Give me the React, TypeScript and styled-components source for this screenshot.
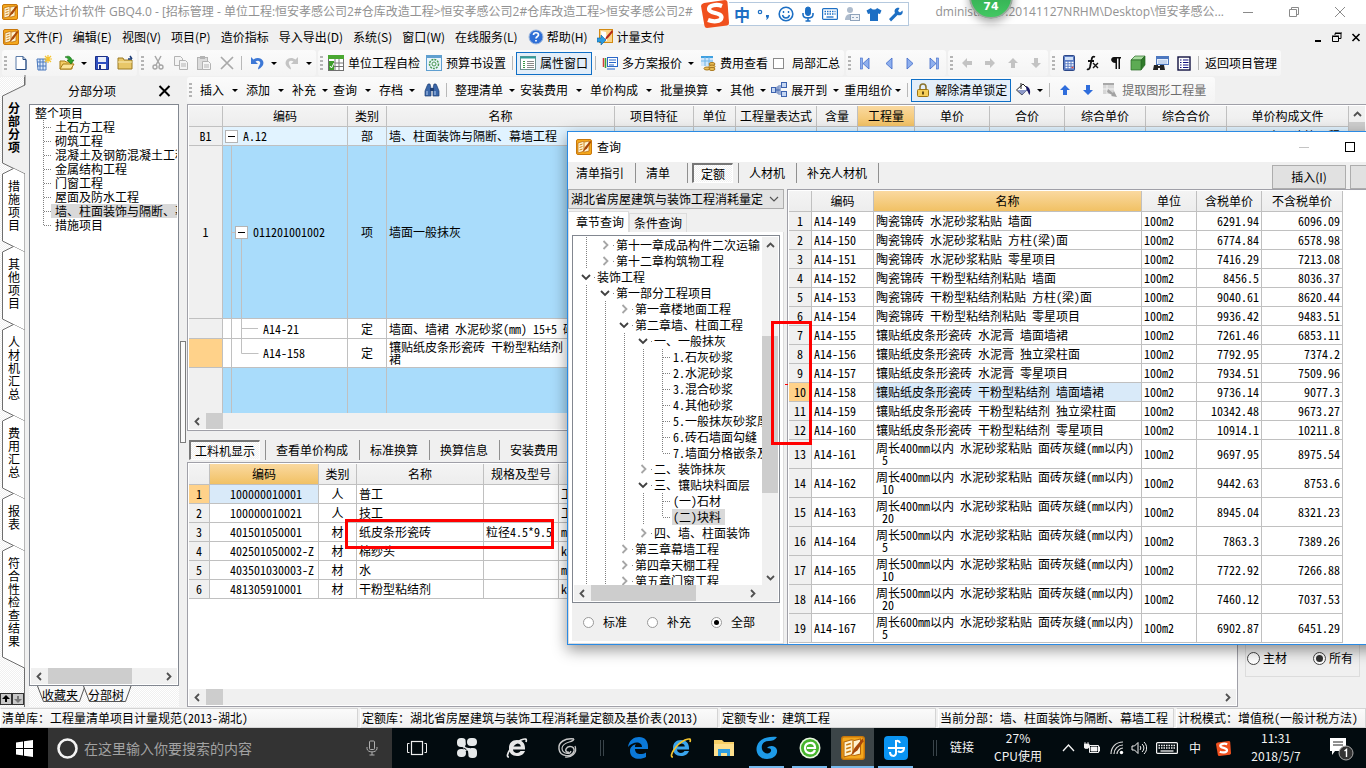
import React from "react";
import styled, { createGlobalStyle, css } from "styled-components";

const GlobalStyle = createGlobalStyle`
  * { box-sizing: border-box; }
  html, body { margin: 0; padding: 0; }
  body {
    background: #f0f0f0;
    color: #000;
    font-family: "Noto Sans CJK SC", "Liberation Sans", sans-serif;
    font-size: 12px;
    line-height: 16px;
    overflow: hidden;
  }
  button, input, select { font: inherit; color: inherit; margin: 0; }
  button { padding: 0; border: 0; background: none; white-space: nowrap; }
  svg { display: block; flex: none; }
`;

const halfWidth = css`
  font-feature-settings: "hwid";
`;

const Page = styled.div`
  position: relative;
  display: flex;
  flex-direction: column;
  min-height: 100vh;
  overflow: hidden;
  background: #f0f0f0;
`;

/* ---------- title and menu ---------- */

const TitleBar = styled.header`
  display: flex;
  align-items: center;
  height: 24px;
  padding: 0 20px 0 2px;
  gap: 4px;
  background: #fff;
  color: #929292;
  font-family: "Open Sans", "Noto Sans CJK SC", sans-serif;
`;
const TitleText = styled.div`
  flex: 1;
  display: flex;
  justify-content: space-between;
  max-width: 1202px;
  white-space: nowrap;
  overflow: hidden;
`;
const WindowButtons = styled.div`
  display: flex;
  gap: 34px;
  margin-left: auto;
`;
const MenuBar = styled.nav`
  display: flex;
  align-items: center;
  height: 26px;
  padding: 0 4px 0 3px;
`;
const MenuItem = styled.button`
  display: flex;
  align-items: center;
  gap: 3px;
  height: 22px;
  padding: 0 5px;
`;
const ChildButtons = styled.div`
  display: flex;
  gap: 7px;
  margin-left: auto;
`;

/* ---------- tool bars ---------- */

const ToolBar = styled.div<{ $indent?: boolean }>`
  display: flex;
  gap: 2px;
  height: 27px;
  padding: ${(p) => (p.$indent ? "0" : "0 0 0 2px")};
`;
const Segment = styled.div<{ $end?: boolean }>`
  display: flex;
  align-items: center;
  height: 26px;
  padding-right: ${(p) => (p.$end ? "6px" : "1px")};
  border-radius: 3px;
  background: linear-gradient(#fbfbfb, #f4f4f4);
`;
const Grip = styled.span`
  width: 3px;
  height: 15px;
  margin: 0 2px;
  background: repeating-linear-gradient(#b4b4b4 0 2px, transparent 2px 4px);
`;
const IconButton = styled.button`
  display: flex;
  align-items: center;
  justify-content: center;
  width: 23px;
  height: 23px;
`;
const Caret = styled.span<{ $room?: number }>`
  display: flex;
  justify-content: center;
  width: ${(p) => p.$room || 12}px;
  &::after {
    content: "";
    border: 3px solid transparent;
    border-top: 3px solid currentColor;
    border-bottom: 0;
  }
`;
const Divider = styled.span<{ $wide?: boolean }>`
  width: 1px;
  height: 14px;
  margin: 0 ${(p) => (p.$wide ? 8 : 3)}px 0 3px;
  background: #b8b8b8;
`;
const LabelButton = styled.button<{ $on?: boolean; $off?: boolean }>`
  display: flex;
  align-items: center;
  gap: 4px;
  height: 23px;
  padding: 0 3px;
  color: ${(p) => (p.$off ? "#6d6d6d" : "#000")};
  ${(p) => p.$on && "border: 1px solid #0f6fc6; background: #e3eef9;"}
`;
const CheckLabel = styled.label`
  display: flex;
  align-items: center;
  gap: 8px;
  padding: 0 3px 0 2px;
`;
const CheckBox = styled.input`
  appearance: none;
  width: 11px;
  height: 11px;
  border: 1px solid #8a8a8a;
  background: #fff;
`;
const DropButton = styled.button`
  display: flex;
  align-items: center;
  height: 23px;
`;
const DropIcon = styled.span`
  padding-right: 4px;
`;

/* ---------- workspace ---------- */

const Workspace = styled.div`
  display: flex;
  flex: 1;
  min-height: 0;
`;
const hatch = css`
  background: repeating-conic-gradient(#fff 0 25%, #f0f0f0 0 50%) 0 0 / 2px 2px;
`;
const SideTabs = styled.div`
  display: flex;
  flex-direction: column;
  width: 25px;
  padding-top: 17px;
  ${hatch}
  border-right: 1px solid #6e6e6e;
`;
const SideTab = styled.button<{ $on?: boolean }>`
  position: relative;
  flex: none;
  padding: 7px 0 19px 1px;
  width: 24px;
  line-height: 13px;
  font-weight: ${(p) => (p.$on ? 700 : 400)};
  svg { position: absolute; left: 0; top: -18px; overflow: visible; }
  span { position: relative; display: block; width: 12px; margin-left: 7px; white-space: normal; }
`;
const SideScroll = styled.div`
  display: flex;
  margin-top: auto;
  margin-bottom: 2px;
`;
const TinyButton = styled.button`
  display: flex;
  align-items: center;
  justify-content: center;
  width: 12px;
  height: 12px;
  background: #c8c8c8;
  border: 1px solid #333;
`;

const SidePanel = styled.aside`
  display: flex;
  flex-direction: column;
  width: 154px;
  padding-left: 4px;
`;
const PanelHead = styled.div`
  display: flex;
  align-items: center;
  justify-content: space-between;
  height: 27px;
  padding: 0 8px 0 39px;
`;
const TreeBox = styled.div`
  display: flex;
  flex-direction: column;
  flex: 1;
  min-height: 0;
  padding: 1px;
  border: 1px solid #828790;
  background: #fff;
`;
const SmallTree = styled.ul`
  flex: 1;
  margin: 0;
  padding: 0;
  list-style: none;
  line-height: 14px;
  overflow: hidden;
  ${halfWidth}
`;
const SmallRow = styled.li<{ $on?: boolean }>`
  display: flex;
  height: 14px;
  padding-left: ${(p) => (p.$on === undefined ? 4 : 10)}px;
  white-space: nowrap;
  span { flex: 1; padding-left: 4px; background: ${(p) => (p.$on ? "#d9d9d9" : "none")}; overflow: hidden; }
  &:first-child span { padding-left: 0; }
`;
const BottomTabs = styled.div`
  display: flex;
  height: 21px;
  padding-left: 8px;
  ${hatch}
`;
const BottomTab = styled.button`
  position: relative;
  width: 46px;
  height: 17px;
  svg { position: absolute; left: 0; top: 0; overflow: visible; }
  span { position: relative; }
`;
const Splitter = styled.div`
  display: flex;
  align-items: center;
  width: 8px;
  padding: 0 1px;
  &::after {
    content: "";
    width: 6px;
    height: 100px;
    border: 1px solid #7c7c7c;
    background: #fafafa;
  }
`;
const Main = styled.main`
  display: flex;
  flex: 1;
  flex-direction: column;
  min-width: 0;
`;

/* ---------- grids ---------- */

const GridFrame = styled.div`
  display: flex;
  flex-direction: column;
  padding: 1px 1px 1px 1px;
  border: 1px solid #a0a0a8;
  border-right-width: 0;
  background: #fff;
`;
const GridBody = styled.div`
  display: flex;
  flex: 1;
  min-height: 0;
  overflow: hidden;
`;
const DataTable = styled.table<{ $fill?: boolean }>`
  ${(p) => (p.$fill ? "flex: 1; min-width: 0;" : "width: 1px; flex: none;")}
  align-self: flex-start;
  table-layout: fixed;
  border-collapse: separate;
  border-spacing: 0;
  line-height: 12px;
  ${halfWidth}
`;
const Th = styled.th<{ $hot?: boolean }>`
  height: 21px;
  padding: 0;
  border-right: 1px solid #c0c0c0;
  border-bottom: 1px solid #c0c0c0;
  background: ${(p) => (p.$hot ? "linear-gradient(#fad9a0, #f1c164)" : "linear-gradient(#f4f4f4, #ededed)")};
  font-weight: 400;
  text-align: center;
  white-space: nowrap;
  overflow: hidden;
`;
const Td = styled.td<{ $h?: number; $align?: string; $bg?: string; $pre?: boolean }>`
  height: ${(p) => p.$h || 19}px;
  padding: 0 2px;
  border-right: 1px solid #c0c0c0;
  border-bottom: 1px solid #c0c0c0;
  background: ${(p) => p.$bg || "#fff"};
  text-align: ${(p) => p.$align || "left"};
  white-space: ${(p) => (p.$pre ? "pre" : "normal")};
  overflow: hidden;
`;
const CodeCell = styled.div`
  display: flex;
  align-items: center;
  margin: 0 -2px;
  white-space: nowrap;
`;
const IndentText = styled.div`
  padding-left: 18px;
  white-space: nowrap;
`;

/* ---------- scroll bars ---------- */

const HScroll = styled.div`
  display: flex;
  align-items: center;
  height: 16px;
  background: #f0f0f0;
`;
const VScroll = styled.div`
  display: flex;
  flex-direction: column;
  align-items: center;
  width: 16px;
  background: #f0f0f0;
`;
const ScrollArrow = styled.button`
  display: flex;
  align-items: center;
  justify-content: center;
  flex: none;
  width: 17px;
  height: 16px;
`;
const Track = styled.div<{ $before?: number; $size: number; $v?: boolean }>`
  flex: 1;
  align-self: stretch;
  display: flex;
  flex-direction: ${(p) => (p.$v ? "column" : "row")};
  padding: ${(p) => (p.$v ? `${p.$before || 0}px 0 0` : `0 0 0 ${p.$before || 0}px`)};
  &::before {
    content: "";
    flex: 0 0 ${(p) => p.$size}px;
    background: #cdcdcd;
  }
`;

/* ---------- tab strips ---------- */

const TabStrip = styled.div<{ $tall?: boolean }>`
  display: flex;
  align-items: center;
  height: ${(p) => (p.$tall ? 24 : 22)}px;
`;
const StripTab = styled.button<{ $on?: boolean }>`
  height: 20px;
  text-align: left;
  min-width: 51px;
  padding: 0 11px 0 10px;
  &:first-child { padding-left: 8px; }
  ${(p) =>
    p.$on &&
    css`
      min-width: 41px;
      margin: 0 5px 0 4px;
      padding: 0 4px;
      text-align: center;
      border: 1px solid #fff;
      border-top: 2px solid #777;
      border-left: 2px solid #777;
      ${hatch}
      &:first-child { padding-left: 4px; margin-left: 2px; }
    `}
`;
const StripLine = styled.span`
  width: 1px;
  height: 20px;
  background: #909090;
`;
const Spacer = styled.div`
  height: 7px;
`;

const Lower = styled.div`
  display: flex;
  flex: 1;
  min-height: 0;
`;
const FilterPane = styled.div`
  display: flex;
  flex-direction: column;
  justify-content: flex-end;
  width: 129px;
  padding: 0 6px 30px 7px;
  border-left: 1px solid #a0a0a8;
`;
const FilterGroup = styled.fieldset`
  display: flex;
  justify-content: space-between;
  align-items: flex-start;
  height: 60px;
  margin: 0;
  padding: 32px 6px 0 1px;
  border: 1px solid #dcdcdc;
  ${halfWidth}
`;
const RadioLabel = styled.label<{ $gap?: number }>`
  display: flex;
  align-items: center;
  gap: ${(p) => p.$gap || 3}px;
`;
const Radio = styled.input<{ $dark?: boolean }>`
  appearance: none;
  display: grid;
  place-items: center;
  width: ${(p) => (p.$dark ? 13 : 11)}px;
  height: ${(p) => (p.$dark ? 13 : 11)}px;
  border: 1px solid ${(p) => (p.$dark ? "#444" : "#999")};
  border-radius: 50%;
  background: #fff;
  &:checked::before {
    content: "";
    width: ${(p) => (p.$dark ? 7 : 5)}px;
    height: ${(p) => (p.$dark ? 7 : 5)}px;
    border-radius: 50%;
    background: ${(p) => (p.$dark ? "#333" : "#000")};
  }
`;

/* ---------- status and task bar ---------- */

const StatusBar = styled.footer`
  display: grid;
  grid-template-columns: 358fr 358fr 216fr 236fr 190fr;
  gap: 2px;
  height: 21px;
  padding-top: 1px;
  white-space: nowrap;
  ${halfWidth}
`;
const StatusCell = styled.div`
  padding: 1px 1px 0;
  border: 1px solid #d4d4d4;
  border-left-color: #fff;
  background: linear-gradient(#fbfbfb, #f0f0f0);
  overflow: hidden;
`;
const TaskBar = styled.footer`
  display: flex;
  align-items: stretch;
  height: 40px;
  background: #020b0f;
  color: #f4f4f4;
`;
const StartButton = styled.button`
  display: flex;
  align-items: center;
  justify-content: center;
  width: 48px;
  background: #000;
`;
const SearchBox = styled.label`
  display: flex;
  align-items: center;
  gap: 5px;
  width: 344px;
  padding: 0 12px 0 8px;
  background: #333;
`;
const SearchInput = styled.input`
  flex: 1;
  min-width: 0;
  padding: 0;
  border: 0;
  outline: 0;
  background: none;
  font-size: 14px;
  line-height: 20px;
  &::placeholder { color: #a2a2a2; opacity: 1; }
`;
const TaskButton = styled.button<{ $wide?: boolean; $on?: boolean; $run?: boolean }>`
  display: flex;
  align-items: center;
  justify-content: center;
  width: ${(p) => (p.$wide ? 50 : 43)}px;
  background: ${(p) => (p.$on ? "#3c4548" : "none")};
  ${(p) => p.$run && "box-shadow: inset 0 -2px #76b9ed; border: solid transparent; border-width: 0 4px;"}
  ${(p) => p.$on && "border-width: 0;"}
`;
const TaskLine = styled.span`
  align-self: center;
  width: 4px;
  height: 16px;
  margin: 0 12px 0 8px;
  border: solid #39444a;
  border-width: 0 1px;
`;
const Tray = styled.div`
  display: flex;
  align-items: center;
  margin-left: auto;
`;
const TrayText = styled.div<{ $w: number }>`
  width: ${(p) => p.$w}px;
  text-align: center;
  line-height: 18px;
  padding-bottom: 2px;
`;
const TrayIcon = styled.button<{ $w?: number }>`
  display: flex;
  justify-content: center;
  width: ${(p) => p.$w || 24}px;
`;

/* ---------- query dialog ---------- */

const Dialog = styled.section`
  position: absolute;
  left: 567px;
  right: -59px;
  top: 131px;
  height: 514px;
  display: flex;
  flex-direction: column;
  border: 1px solid #2a8ae4;
  background: #f0f0f0;
  box-shadow: 0 5px 14px rgba(0, 0, 0, 0.42);
`;
const DialogTitle = styled.div`
  display: flex;
  align-items: center;
  gap: 5px;
  height: 30px;
  padding: 0 68px 0 8px;
  background: #fff;
`;
const DialogTools = styled.div`
  display: flex;
  justify-content: space-between;
  height: 27px;
`;
const DialogActions = styled.div`
  display: flex;
  gap: 4px;
  padding-top: 3px;
`;
const PushButton = styled.button`
  width: 74px;
  height: 24px;
  border: 1px solid #adadad;
  background: #e1e1e1;
`;
const DialogBody = styled.div`
  display: flex;
  flex: 1;
  gap: 3px;
  min-height: 0;
`;
const QuerySide = styled.div`
  display: flex;
  flex-direction: column;
  width: 216px;
`;
const SelectWrap = styled.div`
  display: flex;
  align-items: center;
  height: 20px;
  border: 1px solid #adadad;
  background: #e3e3e3;
`;
const Select = styled.select`
  appearance: none;
  flex: 1;
  padding: 0 0 0 2px;
  border: 0;
  background: none;
  outline: 0;
`;
const PageTabs = styled.div`
  display: flex;
  align-items: flex-end;
  height: 23px;
`;
const PageTab = styled.button<{ $on?: boolean }>`
  height: ${(p) => (p.$on ? 21 : 19)}px;
  padding: 0 4px;
  padding-left: ${(p) => (p.$on ? 7 : 4)}px;
  border: 1px solid #dcdcdc;
  border-bottom: 0;
  background: ${(p) => (p.$on ? "#fff" : "#f0f0f0")};
`;
const PageBox = styled.div`
  display: flex;
  flex-direction: column;
  flex: 1;
  min-height: 0;
  padding: 3px 3px 2px;
  border: 1px solid #dcdcdc;
  border-top: 0;
  background: #fff;
`;
const TreeArea = styled.div`
  display: flex;
  flex: 1;
  min-height: 0;
`;
const Tree = styled.ul`
  flex: 1;
  min-width: 0;
  margin: 0;
  padding: 0 0 0 3px;
  list-style: none;
  overflow: hidden;
  ${halfWidth}
`;
const TreeRow = styled.li<{ $on?: boolean }>`
  display: flex;
  height: 16px;
  white-space: nowrap;
  span { padding: 0 4px 0 1px; background: ${(p) => (p.$on ? "#d9d9d9" : "none")}; }
`;
const RadioBar = styled.div`
  display: flex;
  gap: 20px;
  align-items: center;
  height: 38px;
  padding-left: 11px;
  background: #f0f0f0;
`;
const ResultFrame = styled.div`
  flex: 1;
  display: flex;
  min-width: 0;
  overflow: hidden;
  padding: 1px 0 0 1px;
  border-left: 1px solid #a0a0a8;
  border-top: 1px solid #a0a0a8;
  background: #fff;
`;

/* ---------- overlays ---------- */

const RedBox = styled.div<{ $x: number; $y: number; $w: number; $h: number }>`
  position: absolute;
  left: ${(p) => p.$x}px;
  top: ${(p) => p.$y}px;
  width: ${(p) => p.$w}px;
  height: ${(p) => p.$h}px;
  border: 3px solid #f00;
  pointer-events: none;
`;
const RedDash = styled.div`
  position: absolute;
  left: 785px;
  top: 384px;
  width: 3px;
  height: 1px;
  background: #f00;
`;
const ImeBar = styled.div`
  position: absolute;
  left: 701px;
  top: 0;
  display: flex;
  align-items: center;
  height: 28px;
`;
const ImeIcons = styled.div`
  display: flex;
  align-items: center;
  height: 24px;
  padding: 0 1px 0 2px;
  border: 1px solid #b5c9de;
  border-left: 0;
  background: #fff;
`;
const ImeButton = styled.button`
  display: flex;
  align-items: center;
  justify-content: center;
  width: 22px;
  color: #1d6fc4;
  font-size: 16px;
  font-weight: 700;
`;
const Ball = styled.div`
  position: absolute;
  left: 969px;
  top: -25px;
  display: flex;
  align-items: flex-end;
  justify-content: center;
  width: 44px;
  height: 44px;
  padding-bottom: 3px;
  border: 2px solid #9aa89d;
  border-radius: 50%;
  background: linear-gradient(#36b255 50%, #42c862);
  box-shadow: 0 3px 8px rgba(0, 0, 0, 0.35);
  color: #fff;
  font: 700 11px/14px "DejaVu Sans", sans-serif;
`;

/* ---------- drawings ---------- */

const S = ({ w = 16, h = 16, vb, children }: { w?: number; h?: number; vb?: string; children?: React.ReactNode }) => (
  <svg width={w} height={h} viewBox={vb || `0 0 ${w} ${h}`} fill="none" aria-hidden="true">
    {children}
  </svg>
);

const AppIcon = ({ size = 16 }: { size?: number }) => (
  <S w={size} h={size} vb="0 0 16 16">
    <rect x=".5" y=".5" width="15" height="15" rx="1.5" fill="#f4a81d" stroke="#c9770a" />
    <path d="M2 4l5-1.500 2 .5 4-1v10l-4 1-2-.5-5 1.500z" fill="#fff3d0" stroke="#b5660a" strokeWidth=".7" />
    <path d="M3.500 6l3-1M3.500 8.500l3-1M3.500 11l3-1M8 3v9" stroke="#c9770a" strokeWidth=".9" />
    <path d="M14.500 1.500L9 8l-2.500 5L11 9.500l4-6z" fill="#a8480a" />
  </S>
);
const Chevron = ({ dir, color = "#505050", size = 9 }: { dir: "left" | "right" | "up" | "down"; color?: string; size?: number }) => {
  const d = { left: "M6 1L2.500 4.500 6 8", right: "M3 1l3.500 3.500L3 8", up: "M1 6l3.500-3.500L8 6", down: "M1 3l3.500 3.500L8 3" }[dir];
  return (
    <S w={size} h={size} vb="0 0 9 9">
      <path d={d} stroke={color} strokeWidth="1.8" />
    </S>
  );
};
const MinusBox = () => (
  <S w={13} h={13}>
    <rect x=".5" y=".5" width="12" height="12" fill="#fff" stroke="#b4b4b4" />
    <path d="M3 6.500h7" stroke="#000" />
  </S>
);
const Guide = ({ kind }: { kind: "line" | "leaf" | "last" | "open" | "closed" }) => (
  <S w={19} h={16}>
    {(kind === "line" || kind === "leaf") && <path d="M9.500 0v16" stroke="#808080" strokeDasharray="1 1" />}
    {kind === "last" && <path d="M9.500 0v8" stroke="#808080" strokeDasharray="1 1" />}
    {(kind === "leaf" || kind === "last") && <path d="M10 8.500h8" stroke="#808080" strokeDasharray="1 1" />}
    {kind === "open" && <path d="M5 6l4 4 4-4" stroke="#404040" strokeWidth="1.800" />}
    {kind === "closed" && <path d="M7.500 4l4 4-4 4" stroke="#a6a6a6" strokeWidth="1.800" />}
    {(kind === "open" || kind === "closed") && <path d="M17 8.500h1" stroke="#808080" />}
  </S>
);

const NewIcon = () => (
  <S><path d="M3 1.500h7l3 3v10H3z" fill="#fff" stroke="#5a7ba8" /><path d="M10 1.500v3h3M13 5v9.500H3.500" stroke="#264a80" /></S>
);
const GridNewIcon = () => (
  <S><path d="M1 4h9v11H2z" fill="#dbe9fb" stroke="#4a78bd" /><path d="M4 4v11M7 4v11M1 7h9M1 11h9" stroke="#4a78bd" /><path d="M12 0v8M8 4h8M9 1l6 6M15 1L9 7" stroke="#f5c431" strokeWidth="1.200" /></S>
);
const OpenIcon = () => (
  <S><path d="M1 6h5l1 1h6v7H1z" fill="#f4cd66" stroke="#a77c14" /><path d="M1 14l3-5h11l-3 5z" fill="#fbe49a" stroke="#a77c14" /><path d="M6 2c4-2 6 0 7 3h2l-3 4-4-4h2c-1-2-2-2-4-3z" fill="#2ba12b" stroke="#146b14" strokeWidth=".6" /></S>
);
const SaveIcon = () => (
  <S><path d="M1.500 1.500h12l1 1v12h-13z" fill="#2f4fc0" stroke="#1b2f86" /><rect x="4" y="2" width="8" height="5" fill="#e8edfa" /><rect x="4" y="9" width="8" height="5" fill="#f7f7f7" /><rect x="5" y="10" width="2" height="4" fill="#1b2f86" /></S>
);
const FolderIcon = () => (
  <S><path d="M1 3h5l1 2h8v9H1z" fill="#e8c768" stroke="#9c7a22" /><path d="M1 7h14" stroke="#f9eab5" /><path d="M11 4h4M13 1l2 3" stroke="#1c3c78" strokeWidth="1.500" /></S>
);
const CutIcon = () => (
  <S><path d="M5 1l5 9M11 1L6 10" stroke="#a6a6a6" strokeWidth="1.500" /><circle cx="5" cy="12" r="2" stroke="#a6a6a6" strokeWidth="1.400" /><circle cx="11" cy="12" r="2" stroke="#a6a6a6" strokeWidth="1.400" /></S>
);
const CopyIcon = () => (
  <S><path d="M1.500 1.500h6l2 2v7h-8z" fill="#f4f4f4" stroke="#b3b3b3" /><path d="M6.500 5.500h6l2 2v7h-8z" fill="#f4f4f4" stroke="#b3b3b3" /><path d="M8 9h5M8 11h5" stroke="#b3b3b3" /></S>
);
const PasteIcon = () => (
  <S><rect x="1.500" y="2.500" width="10" height="12" fill="#dcdcdc" stroke="#b3b3b3" /><rect x="4" y="1" width="5" height="3" fill="#b3b3b3" /><path d="M6.500 6.500h6l2 2v6h-8z" fill="#f6f6f6" stroke="#b3b3b3" /><path d="M8 10h5M8 12h5" stroke="#b3b3b3" /></S>
);
const DeleteIcon = () => <S><path d="M2 2l12 12M14 2L2 14" stroke="#a9a9a9" strokeWidth="1.700" /></S>;
const UndoIcon = ({ color = "#3d78d6", flip }: { color?: string; flip?: boolean }) => (
  <S><g transform={flip ? "matrix(-1 0 0 1 16 0)" : undefined}><path d="M2 2v7h7L6.500 6.500c3-2 5.500 0 4.500 2.500-.5 2-2 3-2 5.500 4-2 6.500-5 5-8.500S7.500 2 4.500 4.500z" fill={color} /></g></S>
);
const CheckTableIcon = () => (
  <S><rect x=".5" y=".5" width="15" height="15" fill="#fff" stroke="#6f6f6f" /><rect x="0" y="0" width="16" height="4" fill="#4aa832" /><path d="M1 8h14M1 11.500h14M7 4v11M11 4v11" stroke="#777" /><rect x="1" y="6" width="5" height="9" fill="#3e9e2a" /><path d="M2 11l1.500 2L6 8" stroke="#fff" /></S>
);
const GearPageIcon = () => (
  <S><rect x=".5" y=".5" width="15" height="15" fill="#e8f4fb" stroke="#5f9fd0" /><path d="M1 2h14" stroke="#5f9fd0" strokeWidth="2" /><circle cx="8" cy="9" r="4.500" stroke="#4b9a52" strokeDasharray="2 1" strokeWidth="1.500" /><circle cx="8" cy="9" r="2" stroke="#4b9a52" /></S>
);
const WindowListIcon = () => (
  <S><rect x=".5" y="1.500" width="15" height="13" fill="#fff" stroke="#6c8f8f" /><path d="M0 2.500h16" stroke="#2f9c9c" strokeWidth="2" /><path d="M3 6.500h2M3 8.500h2M3 10.500h2M3 12.500h2" stroke="#3a9a45" /><path d="M7 6.500h7M7 8.500h7M7 10.500h7M7 12.500h7" stroke="#888" /></S>
);
const PlansIcon = () => (
  <S><path d="M1.500 3v9" stroke="#d23c3c" strokeWidth="1.500" /><path d="M3.500 3v10" stroke="#3aa53a" strokeWidth="1.500" /><rect x="5.500" y="2.500" width="10" height="9" fill="#fff" stroke="#2966c8" /><path d="M7 5h7M7 7.500h7M7 10h5M5 14h8" stroke="#2966c8" /></S>
);
const CoinsIcon = () => (
  <S><rect x="1" y="1" width="12" height="10" fill="#cfe6fb" /><path d="M1 2h12" stroke="#3fa0e0" strokeWidth="2" /><path d="M1 6h12M5 2v9M9 2v9" stroke="#6fb5e8" /><ellipse cx="12" cy="9" rx="3" ry="1.500" fill="#edc25a" stroke="#a8761c" /><ellipse cx="12" cy="11.500" rx="3" ry="1.500" fill="#edc25a" stroke="#a8761c" /><ellipse cx="7" cy="13.500" rx="3" ry="1.500" fill="#edc25a" stroke="#a8761c" /><ellipse cx="12" cy="14" rx="3" ry="1.500" fill="#edc25a" stroke="#a8761c" /></S>
);
const Nav = ({ kind }: { kind: "first" | "prev" | "next" | "last" }) => (
  <S>
    <g transform={kind === "next" || kind === "last" ? "matrix(-1 0 0 1 16 0)" : undefined}>
      {(kind === "first" || kind === "last") && <rect x="3.500" y="3" width="2" height="11" fill="#8fb0ee" stroke="#3d68c8" strokeWidth=".6" />}
      <path d="M12 3v11L6 8.500z" fill="#8fb0ee" stroke="#3d68c8" strokeWidth=".8" />
    </g>
  </S>
);
const Arrow = ({ deg, color }: { deg: number; color: string }) => (
  <S><g transform={`rotate(${deg} 8 8)`}><path d="M8 3l5 5h-3v5H6V8H3z" fill={color} /></g></S>
);
const CalcIcon = () => (
  <S><rect x="2.500" y=".5" width="11" height="15" rx="1" fill="#5b7cc4" stroke="#2c4787" /><rect x="4" y="2" width="8" height="3" fill="#cfe0f7" /><path d="M4.500 7.500h8M4.500 10h8M4.500 12.500h8" stroke="#fff" strokeWidth="1.500" strokeDasharray="2 1" /><path d="M10.500 12.500h2" stroke="#e04a3a" strokeWidth="1.500" /></S>
);
const FxIcon = () => (
  <S><path d="M11 2c-2-1-3 0-3.500 3L6 12c-.5 2-1.500 3-3 2M4 6h6" stroke="#111" strokeWidth="1.800" /><path d="M9 8l5 5M14 8l-5 5" stroke="#111" strokeWidth="1.400" /></S>
);
const ParaIcon = () => <S><path d="M7 2h7v1.500h-1V14h-1.500V3.500H10V14H8.500V8C3 8 3 2 7 2z" fill="#111" /></S>;
const CubeIcon = () => (
  <S><path d="M1 5l4-4h10l-4 4z" fill="#a9dba0" stroke="#2a6a26" strokeWidth=".7" /><path d="M11 5l4-4v9l-4 5z" fill="#2f7a2a" stroke="#2a6a26" strokeWidth=".7" /><path d="M1 5h10v10H1z" fill="#5dab54" stroke="#2a6a26" strokeWidth=".7" /></S>
);
const LookIcon = () => (
  <S><rect x="3.500" y="1.500" width="12" height="8" fill="#e7effb" stroke="#4d78c0" /><path d="M4 3h11" stroke="#4d78c0" strokeWidth="2" /><path d="M5 6h9M5 8h9" stroke="#9fb8df" /><path d="M1 10h4v5H0zM7 10h4l1 5H7z" fill="#222" /><path d="M5 11h2v2H5z" fill="#222" /></S>
);
const ListIcon = () => (
  <S><rect x="2" y="2" width="12" height="13" fill="#fff" stroke="#101040" strokeWidth="1.400" /><path d="M4 5h1.500M4 7.500h1.500M4 10h1.500M4 12.500h1.500M7 5h5.500M7 7.500h5.500M7 10h5.500M7 12.500h5.500" stroke="#101080" /></S>
);
const BinocularsIcon = () => (
  <S><path d="M3 4l1-2h2l1 4v8H1V9zM13 4l-1-2h-2L9 6v8h6V9z" fill="#3a66a8" stroke="#1f3f73" strokeWidth=".7" /><rect x="6" y="6" width="4" height="3" fill="#1f3f73" /><path d="M3 9v4M11 9v4" stroke="#b4cdf0" /></S>
);
const ExpandIcon = () => (
  <S><rect x=".5" y="5.500" width="4" height="5" fill="#c5d6f2" stroke="#3d63ae" /><path d="M5 8h4M9 3v10" stroke="#3d63ae" /><rect x="10.500" y=".5" width="5" height="5" fill="#c5d6f2" stroke="#3d63ae" /><rect x="10.500" y="9.500" width="5" height="5" fill="#c5d6f2" stroke="#3d63ae" /><path d="M4 6l4-3v10L4 10z" fill="#3d63ae" opacity=".6" /></S>
);
const LockIcon = () => (
  <S><path d="M5 8V5c0-4 6-4 6 0v3" stroke="#8a7430" strokeWidth="1.600" /><rect x="2.500" y="7.500" width="11" height="7" rx="1" fill="#f5cf5a" stroke="#9c7412" /><path d="M8 9.500v3" stroke="#3c2c04" strokeWidth="1.600" /></S>
);
const BucketIcon = () => (
  <S><path d="M1.500 8L8 2l5 5-6 6z" fill="#fff" stroke="#222" /><path d="M2.500 8h10L7 13z" fill="#8c98c8" /><path d="M6 1v6" stroke="#222" /><path d="M11 4c4 1 5 6 3.500 9-1-1-1.500-4-3-5z" fill="#1a1a66" /></S>
);
const ExtractIcon = () => (
  <S><rect x="1" y="1" width="11" height="11" fill="#d6d6d6" /><path d="M1 2h11" stroke="#a8a8a8" strokeWidth="2" /><path d="M1 7h11M5 3v9" stroke="#f2f2f2" /><path d="M6 7l5 4 1-2 3 6-6-1 1-1-5-3z" fill="#a2a2a2" /></S>
);
const HelpIcon = () => (
  <S><circle cx="8" cy="8" r="7" fill="#2e6fd6" stroke="#9db7dd" /><path d="M5.500 6c0-3 5-3 5 0 0 1.500-2.500 1.500-2.500 3.500M8 11v1.500" stroke="#fff" strokeWidth="1.700" /></S>
);
const PayIcon = () => (
  <S><rect x="2.500" y=".5" width="13" height="13" fill="#fbd487" stroke="#d38a12" /><path d="M4 2l5 1 1 9-5 0z" fill="#fff" /><path d="M15 1L9 8l-1 3 3-2 5-6z" fill="#b5281a" /><path d="M0 9h4V6l5 5-5 5v-3H0z" fill="#2c9be0" stroke="#0e62a0" strokeWidth=".6" /></S>
);
const SogouIcon = ({ size }: { size: number }) => (
  <S w={size} h={size} vb="0 0 28 28">
    <path d="M3 3L24 0q2 0 2.500 2L28 23q0 2-2 2.500L6 28q-2 0-2.500-2L0 6q0-2 3-3z" fill="#f0501e" />
    <path d="M21 6c-5-2-13-1-13 3 0 5 13 3 12.500 8.500C20 22 12 22 7 20" stroke="#fff" strokeWidth="4.200" />
  </S>
);
const blue = "#1d6fc4";
const SmileIcon = () => <S><circle cx="8" cy="8" r="6.800" stroke={blue} strokeWidth="1.600" /><path d="M5.500 5v2M10.500 5v2M4.500 9c1 4 6 4 7 0" stroke={blue} strokeWidth="1.400" /></S>;
const MicIcon = ({ color = blue, hollow }: { color?: string; hollow?: boolean }) => (
  <S><rect x="5.500" y="1" width="5" height="8.500" rx={hollow ? 1 : 2.5} fill={hollow ? "none" : color} stroke={color} /><path d="M3 7v1.500c0 4.500 10 4.500 10 0V7M8 12v3M5.500 15h5" stroke={color} strokeWidth={hollow ? 1 : 1.6} /></S>
);
const KeyboardIcon = ({ color = blue, w = 16 }: { color?: string; w?: number }) => (
  <S w={w} h={14}><rect x=".6" y="1.600" width={w - 1.2} height="10.800" rx="1" stroke={color} strokeWidth="1.200" /><path d={`M2.500 4.500h${w - 5}M2.500 7h${w - 5}`} stroke={color} strokeWidth="1.300" strokeDasharray="1.500 1" /><path d={`M4.500 10h${w - 9}`} stroke={color} strokeWidth="1.300" /></S>
);
const PersonIcon = () => <S><circle cx="6" cy="4" r="3" fill="#aebccd" /><path d="M1 14c0-8 10-8 10 0z" fill="#aebccd" /><rect x="6.500" y="8.500" width="9" height="6" fill="#eef2f7" stroke="#8fa3bb" /><path d="M8 11.500h2M12 11.500h2" stroke="#8fa3bb" /></S>;
const ShirtIcon = () => <S><path d="M5 2c1 2 5 2 6 0l4.500 2.500L14 8l-2-.5V15H4V7.500L2 8 .5 4.500z" fill={blue} /></S>;
const WrenchIcon = () => <S><path d="M14.500 4.500L12 6.500 10 5l1.500-3C8 1 5.500 4 7 7l-6 6 2 2.500L9.500 9C13 10 15.500 8 14.500 4.500z" fill={blue} /></S>;

const WinLogo = () => <S w={17} h={17}><path d="M0 2.500l7-1v6.500H0zM8 1.300L17 0v8H8zM0 9h7v6.500l-7-1zM8 9h9v8l-9-1.300z" fill="#fff" /></S>;
const TaskViewIcon = () => <S w={20} h={16}><rect x="4.500" y="1.500" width="11" height="13" stroke="#eee" strokeWidth="1.200" /><path d="M2.500 3.500h-2v9h2M17.500 3.500h2v9h-2" stroke="#eee" /></S>;
const FlowerIcon = () => (
  <S w={22} h={22}>
    <g fill="#e6e9ea">
      <rect x="1" y="1" width="9" height="9" rx="4" />
      <rect x="11" y="1" width="10" height="8" rx="4" />
      <rect x="1" y="12" width="9" height="8" rx="4" />
      <rect x="12" y="11" width="9" height="10" rx="4" />
      <path d="M8 5c0 5 2 6 6 6s4 3 4 3H9L6 9z" />
    </g>
    <path d="M10.500 1.500c-1 5 0 8 4 9.500M11.500 20.500c1-5 0-8-4-9.500" stroke="#020b0f" />
  </S>
);
const EIcon = ({ color, ring }: { color: string; ring?: string }) => (
  <S w={22} h={22}><path d="M19 14c-1 3-4 5-8 5-5 0-8-3-8-8s3-8 8-8 8 3 8 8v1.500H7c0 4 6 4.500 7.500 1.500zM7.200 9.500h7.600c0-4-7-4-7.600 0z" fill={color} />{ring && <path d="M3 20C-2 20 6 7 15 3c5-2 6-1 5 2" stroke={ring} strokeWidth="1.700" />}</S>
);
const EdgeIcon = () => <S w={22} h={22}><path d="M1 10C2 3 7 0 12 0c6 0 9 4 9 10v2H8c0 6 7 6 11 3.500V20c-5 3-16 3-16-6 0-4 3-6 6-7-1 1-1 2-1 3h7c0-6-9-6-14 0z" fill="#0b79d9" /></S>;
const SwirlIcon = ({ color, bold }: { color: string; bold?: boolean }) => (
  <S w={24} h={24}>
    {bold ? (
      <path d="M22 1c-2 3-5 4-8 4C8 5 6 9 7 13c1 5 8 6 9 2 .5-2-1-3-4-3 2-3 9-3 10 2 1 6-5 9-10 9C4 23 0 16 2 10 4 3 12 0 22 1z" fill={color} />
    ) : (
      <>
        <path d="M19 3C10 2 3 6 4 13c1 8 13 9 15 2 1-5-6-6-8-2-1 2 1 4 3 3" stroke={color} strokeWidth="1.500" />
        <path d="M19 3c-1 4-11 2-12 9 0 6 8 7 9 3M20 10c3 7-4 12-10 11" stroke={color} strokeWidth="1.200" />
      </>
    )}
  </S>
);
const ExplorerIcon = () => <S w={22} h={20}><path d="M1 2h8l2 2h10v14H1z" fill="#f6cf67" /><path d="M1 6h20v12H1z" fill="#fde08d" /><path d="M5 18v-7h12v7h-3v-3H8v3z" fill="#2f9ee0" /></S>;
const GreenBrowser = () => <S w={22} h={22}><circle cx="11" cy="11" r="10.500" fill="#e9f7e2" /><circle cx="11" cy="11" r="9" fill="#46b52c" /><path d="M16 13c-2 5-10 4-10-2s9-7 10-1v1H8" stroke="#fff" strokeWidth="2.200" /></S>;
const BlueApp = () => (
  <S w={24} h={24}>
    <rect width="24" height="24" rx="4" fill="#0a94f2" />
    <path d="M12 4v8M16 7c-1-3-4-3-4 0M4 12h16c0 4-4 5-6 3M12 12v5c0 4-6 4-6-1" stroke="#fff" strokeWidth="2" />
  </S>
);

/* ---------- data ---------- */

const sideTabs = ["分部分项", "措施项目", "其他项目", "人材机汇总", "费用汇总", "报表", "符合性检查结果"];
const sections = ["土石方工程", "砌筑工程", "混凝土及钢筋混凝土工程", "金属结构工程", "门窗工程", "屋面及防水工程", "墙、柱面装饰与隔断、幕墙工程", "措施项目"];

const mainCols: [string, number?][] = [["", 34], ["编码", 125], ["类别", 39], ["名称", 228], ["项目特征", 79], ["单位", 42], ["工程量表达式", 81], ["含量", 41], ["工程量", 57], ["单价", 75], ["合价", 75], ["综合单价", 81], ["综合合价", 81], ["单价构成文件"]];

const resources = [
  ["100000010001", "人", "普工", "", "工日"],
  ["100000010021", "人", "技工", "", "工日"],
  ["401501050001", "材", "纸皮条形瓷砖", "粒径4.5*9.5", "m2"],
  ["402501050002-Z", "材", "棉纱头", "", "kg"],
  ["403501030003-Z", "材", "水", "", "m3"],
  ["481305910001", "材", "干粉型粘结剂", "", "kg"],
];

const tile = "陶瓷锦砖 ";
const strip = "镶贴纸皮条形瓷砖 ";
const perim = (size: number, gap: number) => `周长${size}mm以内 水泥砂浆粘贴 面砖灰缝(mm以内)\n ${gap}`;
const quotas: [string, string, string][] = [
  [tile + "水泥砂浆粘贴 墙面", "6291.94", "6096.09"],
  [tile + "水泥砂浆粘贴 方柱(梁)面", "6774.84", "6578.98"],
  [tile + "水泥砂浆粘贴 零星项目", "7416.29", "7213.08"],
  [tile + "干粉型粘结剂粘贴 墙面", "8456.5", "8036.37"],
  [tile + "干粉型粘结剂粘贴 方柱(梁)面", "9040.61", "8620.44"],
  [tile + "干粉型粘结剂粘贴 零星项目", "9936.42", "9483.51"],
  [strip + "水泥膏 墙面墙裙", "7261.46", "6853.11"],
  [strip + "水泥膏 独立梁柱面", "7792.95", "7374.2"],
  [strip + "水泥膏 零星项目", "7934.51", "7509.96"],
  [strip + "干粉型粘结剂 墙面墙裙", "9736.14", "9077.3"],
  [strip + "干粉型粘结剂 独立梁柱面", "10342.48", "9673.27"],
  [strip + "干粉型粘结剂 零星项目", "10914.1", "10211.8"],
  [perim(400, 5), "9697.95", "8975.54"],
  [perim(400, 10), "9442.63", "8753.6"],
  [perim(400, 20), "8945.04", "8321.23"],
  [perim(500, 5), "7863.3", "7389.26"],
  [perim(500, 10), "7722.92", "7266.88"],
  [perim(500, 20), "7460.12", "7037.53"],
  [perim(600, 5), "6902.87", "6451.29"],
];

type Kind = "leaf" | "last" | "open" | "closed";
const chapters: [number, Kind, string][] = [
  [1, "closed", "第十一章成品构件二次运输"],
  [1, "closed", "第十二章构筑物工程"],
  [0, "open", "装饰工程"],
  [1, "open", "第一部分工程项目"],
  [2, "closed", "第一章楼地面工程"],
  [2, "open", "第二章墙、柱面工程"],
  [3, "open", "一、一般抹灰"],
  [4, "leaf", "1.石灰砂浆"],
  [4, "leaf", "2.水泥砂浆"],
  [4, "leaf", "3.混合砂浆"],
  [4, "leaf", "4.其他砂浆"],
  [4, "leaf", "5.一般抹灰砂浆厚度调整"],
  [4, "leaf", "6.砖石墙面勾缝"],
  [4, "last", "7.墙面分格嵌条及其他"],
  [3, "closed", "二、装饰抹灰"],
  [3, "open", "三、镶贴块料面层"],
  [4, "leaf", "(一)石材"],
  [4, "last", "(二)块料"],
  [3, "closed", "四、墙、柱面装饰"],
  [2, "closed", "第三章幕墙工程"],
  [2, "closed", "第四章天棚工程"],
  [2, "closed", "第五章门窗工程"],
];

const Cols = ({ cols }: { cols: (number | undefined)[] }) => (
  <colgroup>{cols.map((w, i) => <col key={i} style={w ? { width: w } : undefined} />)}</colgroup>
);
const Drop = ({ text, room = 22, icon }: { text: string; room?: number; icon?: React.ReactNode }) => (
  <DropButton>
    {icon && <DropIcon>{icon}</DropIcon>}
    {text}
    <Caret $room={room} />
  </DropButton>
);

function TopBars() {
  return (
    <>
      <TitleBar>
        <AppIcon />
        <TitleText>
          <span>广联达计价软件 GBQ4.0 - [招标管理 - 单位工程:恒安孝感公司2#仓库改造工程&gt;恒安孝感公司2#仓库改造工程&gt;恒安孝感公司2#</span>
          <span>dministrator.20141127NRHM\Desktop\恒安孝感公...</span>
        </TitleText>
        <WindowButtons>
          <S w={12} h={12}><path d="M1 6.500h10" stroke="#8a8a8a" /></S>
          <S w={12} h={12}><path d="M1.500 3.500h7v7h-7zM3.500 3V1.500h7v7H9" stroke="#8a8a8a" /></S>
          <S w={12} h={12}><path d="M1 1l10 10M11 1L1 11" stroke="#8a8a8a" /></S>
        </WindowButtons>
      </TitleBar>
      <MenuBar>
        <AppIcon />
        {["文件(F)", "编辑(E)", "视图(V)", "项目(P)", "造价指标", "导入导出(D)", "系统(S)", "窗口(W)", "在线服务(L)"].map((m) => (
          <MenuItem key={m}>{m}</MenuItem>
        ))}
        <MenuItem><HelpIcon />帮助(H)</MenuItem>
        <MenuItem><PayIcon />计量支付</MenuItem>
        <ChildButtons>
          <S w={12} h={12}><path d="M3 10h6" stroke="#000" strokeWidth="2" /></S>
          <S w={12} h={12}><path d="M1.500 5.500h6v5h-6zM1 5h7M4 4V2.500h6v5H8M4 2h7" stroke="#000" /></S>
          <S w={12} h={12}><path d="M2.500 3l7 7M9.500 3l-7 7" stroke="#000" strokeWidth="1.600" /></S>
        </ChildButtons>
      </MenuBar>
      <ToolBar>
        <Segment>
          <Grip />
          <IconButton><NewIcon /></IconButton>
          <IconButton><GridNewIcon /></IconButton>
          <IconButton><OpenIcon /></IconButton>
          <Caret />
          <IconButton><SaveIcon /></IconButton>
          <IconButton><FolderIcon /></IconButton>
        </Segment>
        <Segment>
          <Grip />
          <IconButton><CutIcon /></IconButton>
          <IconButton><CopyIcon /></IconButton>
          <IconButton><PasteIcon /></IconButton>
          <IconButton><DeleteIcon /></IconButton>
          <Divider />
          <IconButton><UndoIcon /></IconButton>
          <Caret />
          <IconButton><UndoIcon color="#c4c4c4" flip /></IconButton>
          <Caret />
        </Segment>
        <Segment>
          <Grip />
          <LabelButton><CheckTableIcon />单位工程自检</LabelButton>
          <LabelButton><GearPageIcon />预算书设置</LabelButton>
          <Divider />
          <LabelButton $on><WindowListIcon />属性窗口</LabelButton>
          <Divider />
          <LabelButton><PlansIcon />多方案报价</LabelButton>
          <Caret />
          <LabelButton><CoinsIcon />费用查看</LabelButton>
          <CheckLabel><CheckBox type="checkbox" />局部汇总</CheckLabel>
        </Segment>
        <Segment>
          <Grip />
          <IconButton><Nav kind="first" /></IconButton>
          <IconButton><Nav kind="prev" /></IconButton>
          <IconButton><Nav kind="next" /></IconButton>
          <IconButton><Nav kind="last" /></IconButton>
        </Segment>
        <Segment>
          <Grip />
          {[-90, 90, 0, 180].map((d) => (
            <IconButton key={d}><Arrow deg={d} color="#c3c3c3" /></IconButton>
          ))}
        </Segment>
        <Segment>
          <Grip />
          <IconButton><CalcIcon /></IconButton>
          <IconButton><FxIcon /></IconButton>
          <IconButton><ParaIcon /></IconButton>
          <IconButton><CubeIcon /></IconButton>
          <IconButton><LookIcon /></IconButton>
          <IconButton><ListIcon /></IconButton>
          <Divider />
          <LabelButton>返回项目管理</LabelButton>
        </Segment>
      </ToolBar>
    </>
  );
}

function SideBar() {
  return (
    <>
      <SideTabs>
        {sideTabs.map((t, i) => {
          const h = t.length * 13 + 15;
          return (
            <SideTab key={t} $on={i === 0}>
              <svg width="25" height={h + 36} fill="none" aria-hidden="true">
                {i === 0 ? (
                  <path d={`M25 -1V9L2.500 20V${h + 20}L25 ${h + 31}`} fill="#f0f0f0" stroke="#6e6e6e" />
                ) : (
                  <path d={`M13.500 14.500L2.500 20V${h + 20}L24.500 ${h + 31}V20z`} fill="#fff" />
                )}
                {i > 0 && <path d={`M13.500 14.500L2.500 20V${h + 20}L24.500 ${h + 31}`} stroke="#6e6e6e" />}
              </svg>
              <span>{t}</span>
            </SideTab>
          );
        })}
        <SideScroll>
          <TinyButton><S w={8} h={8}><path d="M4 0l4 4H5v3H3V4H0z" fill="#000" /></S></TinyButton>
          <TinyButton><S w={8} h={8}><path d="M4 8l4-4H5V1H3v3H0z" fill="#777" /></S></TinyButton>
        </SideScroll>
      </SideTabs>
      <SidePanel>
        <PanelHead>
          分部分项
          <S w={13} h={12}><path d="M1.500 1l10 10M11.500 1l-10 10" stroke="#000" strokeWidth="2" /></S>
        </PanelHead>
        <TreeBox>
          <SmallTree>
            <SmallRow><span>整个项目</span></SmallRow>
            {sections.map((s, i) => (
              <SmallRow key={s} $on={i === 6}>
                <S w={10} h={14}>
                  <path d={`M2.500 0v${i === 7 ? 7 : 14}M3 7.500h7`} stroke="#808080" strokeDasharray="1 1" />
                </S>
                <span>{s}</span>
              </SmallRow>
            ))}
          </SmallTree>
          <HScroll>
            <ScrollArrow><Chevron dir="left" /></ScrollArrow>
            <Track $size={84} />
            <ScrollArrow><Chevron dir="right" /></ScrollArrow>
          </HScroll>
        </TreeBox>
        <BottomTabs>
          {["收藏夹", "分部树"].map((t) => (
            <BottomTab key={t}>
              <svg width="48" height="17" fill="none" aria-hidden="true">
                <path d="M.500 0l6 15.500h36L48 0" fill="#f8f8f8" stroke="#555" />
              </svg>
              <span>{t}</span>
            </BottomTab>
          ))}
        </BottomTabs>
      </SidePanel>
      <Splitter />
    </>
  );
}

const sky = "#a9dcfb";
const pale = "#e1f3ff";
const grey = "#f0f0f0";

const UpperFrame = styled(GridFrame)`
  height: 327px;
`;
const LowerFrame = styled(GridFrame)`
  flex: 1;
  min-width: 0;
`;

function MainGrid() {
  const blanks = (n: number, h: number, bg: string) => Array.from({ length: n }, (_, i) => <Td key={i} $h={h} $bg={bg} />);
  return (
    <UpperFrame>
      <GridBody>
        <DataTable $fill>
          <Cols cols={mainCols.map((c) => c[1])} />
          <thead>
            <tr>{mainCols.map(([t], i) => <Th key={i} $hot={t === "工程量"}>{t}</Th>)}</tr>
          </thead>
          <tbody>
            <tr>
              <Td $bg={grey} $align="center">B1</Td>
              <Td $bg={pale}>
                <CodeCell>
                  <S w={2} h={18} />
                  <MinusBox />
                  <S w={5} h={18} />
                  A.12
                </CodeCell>
              </Td>
              <Td $bg={pale} $align="center">部</Td>
              <Td $bg={pale} $pre>墙、柱面装饰与隔断、幕墙工程</Td>
              {blanks(9, 19, pale)}
              <Td $bg={pale} $align="right" $pre>[房屋建筑工程]</Td>
            </tr>
            <tr>
              <Td $h={173} $bg={grey} $align="center">1</Td>
              <Td $h={173} $bg={sky}>
                <CodeCell>
                  <S w={30} h={172}>
                    <path d="M8.500 0v172M9 86.500h4M18.500 86v86" stroke="#c0c0c0" />
                    <rect x="12.500" y="80.500" width="12" height="12" fill="#fff" stroke="#b4b4b4" />
                    <path d="M15 86.500h7" stroke="#000" />
                  </S>
                  011201001002
                </CodeCell>
              </Td>
              <Td $h={173} $bg={sky} $align="center">项</Td>
              <Td $h={173} $bg={sky}>墙面一般抹灰</Td>
              {blanks(10, 173, sky)}
            </tr>
            <tr>
              <Td $h={20} $bg={grey} />
              <Td $h={20}>
                <CodeCell>
                  <S w={40} h={19}><path d="M8.500 0v19M18.500 0v19M19 9.500h16" stroke="#c0c0c0" /></S>
                  A14-21
                </CodeCell>
              </Td>
              <Td $h={20} $align="center">定</Td>
              <Td $h={20} $pre>墙面、墙裙 水泥砂浆(mm) 15+5 砖墙</Td>
              {blanks(10, 20, "#fff")}
            </tr>
            <tr>
              <Td $h={29} $bg="#ffd28a" />
              <Td $h={29}>
                <CodeCell>
                  <S w={40} h={28}><path d="M8.500 0v28M18.500 0v14.500h17" stroke="#c0c0c0" /></S>
                  A14-158
                </CodeCell>
              </Td>
              <Td $h={29} $align="center">定</Td>
              <Td $h={29}>镶贴纸皮条形瓷砖 干粉型粘结剂 墙面墙裙</Td>
              {blanks(10, 29, "#fff")}
            </tr>
            <tr>
              <Td $h={46} $bg={grey} />
              <Td $h={46} $bg={sky}>
                <CodeCell><S w={40} h={45}><path d="M8.500 0v45" stroke="#c0c0c0" /></S></CodeCell>
              </Td>
              {blanks(12, 46, sky)}
            </tr>
          </tbody>
        </DataTable>
        <VScroll>
          <ScrollArrow><Chevron dir="up" /></ScrollArrow>
          <Track $v $size={40} />
        </VScroll>
      </GridBody>
      <HScroll>
        <ScrollArrow><Chevron dir="left" /></ScrollArrow>
        <Track $size={17} />
      </HScroll>
    </UpperFrame>
  );
}

function LowerArea() {
  return (
    <Lower>
      <LowerFrame>
        <GridBody>
          <DataTable>
            <Cols cols={[21, 109, 38, 127, 75, 60]} />
            <thead>
              <tr>{["", "编码", "类别", "名称", "规格及型号", "单位"].map((t, i) => <Th key={i} $hot={i === 1}>{t}</Th>)}</tr>
            </thead>
            <tbody>
              {resources.map(([code, type, name, spec, unit], i) => (
                <tr key={code}>
                  <Td $bg={i ? grey : "#ffd28a"} $align="center">{i + 1}</Td>
                  <Td $bg={i ? "#fff" : "#d9eaf9"}><IndentText>{code}</IndentText></Td>
                  <Td $align="center">{type}</Td>
                  <Td>{name}</Td>
                  <Td $pre>{spec}</Td>
                  <Td>{unit}</Td>
                </tr>
              ))}
            </tbody>
          </DataTable>
        </GridBody>
        <HScroll>
          <ScrollArrow><Chevron dir="left" /></ScrollArrow>
          <Track $size={17} />
          <ScrollArrow><Chevron dir="right" /></ScrollArrow>
        </HScroll>
      </LowerFrame>
      <FilterPane>
        <FilterGroup>
          <RadioLabel><Radio $dark type="radio" name="kind" />主材</RadioLabel>
          <RadioLabel><Radio $dark type="radio" name="kind" defaultChecked />所有</RadioLabel>
        </FilterGroup>
      </FilterPane>
    </Lower>
  );
}

function QueryDialog() {
  return (
    <Dialog>
      <DialogTitle>
        <AppIcon />
        查询
        <WindowButtons>
          <S w={12} h={12}><path d="M1 6.500h10" stroke="#c4c4c4" /></S>
          <S w={12} h={12}><rect x="1.500" y="1.500" width="9" height="9" stroke="#000" /></S>
        </WindowButtons>
      </DialogTitle>
      <DialogTools>
        <TabStrip>
          <StripTab>清单指引</StripTab><StripLine />
          <StripTab>清单</StripTab><StripLine />
          <StripTab $on>定额</StripTab><StripLine />
          <StripTab>人材机</StripTab><StripLine />
          <StripTab>补充人材机</StripTab><StripLine />
        </TabStrip>
        <DialogActions>
          <PushButton>插入(I)</PushButton>
          <PushButton aria-label="关闭" />
        </DialogActions>
      </DialogTools>
      <DialogBody>
        <QuerySide>
          <SelectWrap>
            <Select aria-label="定额库"><option>湖北省房屋建筑与装饰工程消耗量定</option></Select>
            <S w={17} h={9}><path d="M4 2l4 4 4-4" stroke="#555" strokeWidth="1.200" /></S>
          </SelectWrap>
          <PageTabs>
            <PageTab $on>章节查询</PageTab>
            <PageTab>条件查询</PageTab>
          </PageTabs>
          <PageBox>
            <TreeBox>
              <TreeArea>
                <Tree>
                  {chapters.map(([level, kind, text]) => (
                    <TreeRow key={text} $on={text === "(二)块料"}>
                      {Array.from({ length: level }, (_, i) => <Guide key={i} kind="line" />)}
                      <Guide kind={kind} />
                      <span>{text}</span>
                    </TreeRow>
                  ))}
                </Tree>
                <VScroll>
                  <ScrollArrow><Chevron dir="up" /></ScrollArrow>
                  <Track $v $before={83} $size={157} />
                  <ScrollArrow><Chevron dir="down" /></ScrollArrow>
                </VScroll>
              </TreeArea>
              <HScroll>
                <ScrollArrow><Chevron dir="left" /></ScrollArrow>
                <Track $size={105} />
                <ScrollArrow><Chevron dir="right" /></ScrollArrow>
                <ScrollArrow as="span" />
              </HScroll>
            </TreeBox>
            <RadioBar>
              {["标准", "补充", "全部"].map((t) => (
                <RadioLabel key={t} $gap={9}>
                  <Radio type="radio" name="range" defaultChecked={t === "全部"} />
                  {t}
                </RadioLabel>
              ))}
            </RadioBar>
          </PageBox>
        </QuerySide>
        <ResultFrame>
          <DataTable>
            <Cols cols={[23, 62, 268, 55, 65, 81]} />
            <thead>
              <tr>{["", "编码", "名称", "单位", "含税单价", "不含税单价"].map((t, i) => <Th key={i} $hot={i === 2}>{t}</Th>)}</tr>
            </thead>
            <tbody>
              {quotas.map(([name, taxed, net], i) => {
                const h = i > 11 ? 29 : 19;
                return (
                  <tr key={i}>
                    <Td $h={h} $bg={i === 9 ? "#ffd28a" : grey} $align="center">{i + 1}</Td>
                    <Td $h={h}>A14-{149 + i}</Td>
                    <Td $h={h} $pre $bg={i === 9 ? "#d9eaf9" : undefined}>{name}</Td>
                    <Td $h={h}>100m2</Td>
                    <Td $h={h} $align="right">{taxed}</Td>
                    <Td $h={h} $align="right">{net}</Td>
                  </tr>
                );
              })}
            </tbody>
          </DataTable>
        </ResultFrame>
      </DialogBody>
    </Dialog>
  );
}

function WindowsBar() {
  return (
    <TaskBar>
      <StartButton aria-label="开始"><WinLogo /></StartButton>
      <SearchBox>
        <S w={23} h={23}><circle cx="11.500" cy="11.500" r="9" stroke="#f4f4f4" strokeWidth="2.600" /></S>
        <SearchInput type="text" placeholder="在这里输入你要搜索的内容" />
        <MicIcon color="#b0b0b0" hollow />
      </SearchBox>
      <TaskButton $wide><TaskViewIcon /></TaskButton>
      <TaskButton $wide><FlowerIcon /></TaskButton>
      <TaskButton $wide><EIcon color="#e8e8e8" ring="#e8e8e8" /></TaskButton>
      <TaskButton $wide><SwirlIcon color="#c8c8c8" /></TaskButton>
      <TaskLine />
      <TaskButton><EdgeIcon /></TaskButton>
      <TaskButton><EIcon color="#3aa4ec" ring="#f4c430" /></TaskButton>
      <TaskButton><ExplorerIcon /></TaskButton>
      <TaskButton $run><SwirlIcon color="#1e9be8" bold /></TaskButton>
      <TaskButton $run><GreenBrowser /></TaskButton>
      <TaskButton $run $on><AppIcon size={24} /></TaskButton>
      <TaskButton $run><BlueApp /></TaskButton>
      <Tray>
        <TaskLine />
        <TrayText $w={26}>链接</TrayText>
        <TrayText $w={86}>27%<br />CPU使用</TrayText>
        <TrayIcon $w={14}><S w={13} h={13}><path d="M1 9l5.500-6L12 9" stroke="#f4f4f4" strokeWidth="1.300" /></S></TrayIcon>
        <TrayIcon $w={34}><S><path d="M5.500 5.500h9v7h-9z" stroke="#f4f4f4" /><path d="M7 7h6v4H7zM0 4h5v3c0 2-5 2-5 0zM1 2v2M4 2v2M15 7h1v4h-1z" fill="#f4f4f4" stroke="#f4f4f4" strokeWidth=".8" /></S></TrayIcon>
        <TrayIcon $w={16}><S><path d="M2 14C2 7 7 2 14 2M5 14c0-5 4-9 9-9M8 14c0-3 3-6 6-6" stroke="#d8d8d8" strokeWidth="1.200" /><circle cx="12.500" cy="12.500" r="1.700" fill="#fff" /></S></TrayIcon>
        <TrayIcon $w={28}><S><path d="M1 6h2.500L7 2.500v11L3.500 10H1zM9 6c1 1 1 3 0 4M11 4c2.500 2.500 2.500 5.500 0 8M13 2c3.500 3.500 3.500 8.500 0 12" stroke="#f4f4f4" /></S></TrayIcon>
        <TrayIcon $w={28}><KeyboardIcon color="#f4f4f4" w={22} /></TrayIcon>
        <TrayIcon $w={28}>中</TrayIcon>
        <TrayIcon $w={28}><SogouIcon size={15} /></TrayIcon>
        <TrayText $w={78}>11:31<br />2018/5/7</TrayText>
        <TrayIcon $w={51}>
          <S w={26} h={26}><path d="M2 3h16v13H7l-3 4v-4H2z" fill="#fff" /><path d="M5 7h10M5 10h10" stroke="#222" /><circle cx="18" cy="18" r="7" fill="#333" stroke="#aaa" /><path d="M16.500 16l2-1.500V22" stroke="#fff" strokeWidth="1.400" /></S>
        </TrayIcon>
      </Tray>
    </TaskBar>
  );
}

export default function App() {
  return (
    <Page>
      <GlobalStyle />
      <TopBars />
      <Workspace>
        <SideBar />
        <Main>
          <ToolBar $indent>
            <Segment $end>
              <Grip />
              <LabelButton as="span" />
              <Drop text="插入" />
              <Drop text="添加" />
              <Drop text="补充" room={17} />
              <Drop text="查询" />
              <Drop text="存档" room={17} />
              <IconButton><BinocularsIcon /></IconButton>
              <Divider $wide />
              <Drop text="整理清单" room={17} />
              <Drop text="安装费用" />
              <Drop text="单价构成" />
              <Drop text="批量换算" />
              <Drop text="其他" room={17} />
              <Drop text="展开到" room={17} icon={<ExpandIcon />} />
              <Drop text="重用组价" room={12} />
              <Divider />
              <LabelButton $on><LockIcon />解除清单锁定</LabelButton>
              <IconButton><BucketIcon /></IconButton>
              <Caret />
              <Divider />
              <IconButton><Arrow deg={0} color="#2f6ddc" /></IconButton>
              <IconButton><Arrow deg={180} color="#2f6ddc" /></IconButton>
              <LabelButton $off><ExtractIcon />提取图形工程量</LabelButton>
            </Segment>
          </ToolBar>
          <MainGrid />
          <Spacer />
          <TabStrip $tall>
            <StripTab $on>工料机显示</StripTab><StripLine />
            <StripTab>查看单价构成</StripTab><StripLine />
            <StripTab>标准换算</StripTab><StripLine />
            <StripTab>换算信息</StripTab><StripLine />
            <StripTab>安装费用</StripTab><StripLine />
          </TabStrip>
          <LowerArea />
        </Main>
      </Workspace>
      <StatusBar>
        <StatusCell>清单库：工程量清单项目计量规范(2013-湖北)</StatusCell>
        <StatusCell>定额库：湖北省房屋建筑与装饰工程消耗量定额及基价表(2013)</StatusCell>
        <StatusCell>定额专业：建筑工程</StatusCell>
        <StatusCell>当前分部：墙、柱面装饰与隔断、幕墙工程</StatusCell>
        <StatusCell>计税模式：增值税(一般计税方法)</StatusCell>
      </StatusBar>
      <WindowsBar />
      <QueryDialog />
      <RedBox $x={345} $y={519} $w={209} $h={30} />
      <RedBox $x={771} $y={321} $w={41} $h={124} />
      <RedDash />
      <ImeBar>
        <SogouIcon size={28} />
        <ImeIcons>
          <ImeButton>中</ImeButton>
          <ImeButton><S><circle cx="4" cy="6" r="1.700" stroke={blue} strokeWidth="1.200" /><path d="M10 9h3c0 3-1 4-3 5 1-2 1-2 0-3z" fill={blue} /></S></ImeButton>
          <ImeButton><SmileIcon /></ImeButton>
          <ImeButton><MicIcon /></ImeButton>
          <ImeButton><KeyboardIcon /></ImeButton>
          <ImeButton><PersonIcon /></ImeButton>
          <ImeButton><ShirtIcon /></ImeButton>
          <ImeButton><WrenchIcon /></ImeButton>
        </ImeIcons>
      </ImeBar>
      <Ball>74</Ball>
    </Page>
  );
}
